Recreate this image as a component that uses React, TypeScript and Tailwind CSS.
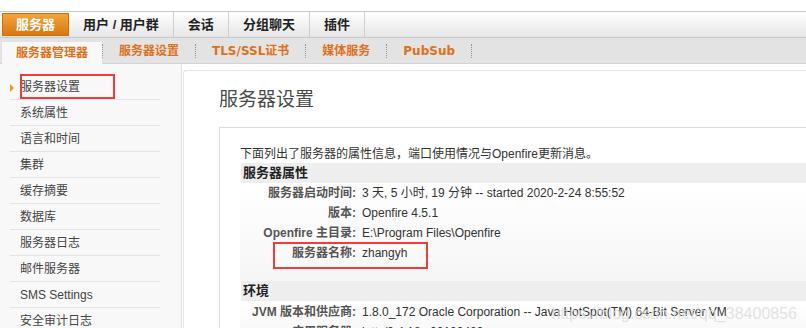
import type { ReactNode } from "react";

const FONT = { fontFamily: '"Liberation Sans", "Noto Sans CJK SC", sans-serif' };
const SUB_FONT = { fontFamily: '"DejaVu Sans", "Noto Sans CJK SC", sans-serif' };

const TABS = ["服务器", "用户 / 用户群", "会话", "分组聊天", "插件"];
const SUBTABS = ["服务器管理器", "服务器设置", "TLS/SSL证书", "媒体服务", "PubSub"];
const NAV = [
  "服务器设置",
  "系统属性",
  "语言和时间",
  "集群",
  "缓存摘要",
  "数据库",
  "服务器日志",
  "邮件服务器",
  "SMS Settings",
  "安全审计日志",
];

function Row({ label, children, boxed }: { label: string; children: ReactNode; boxed?: boolean }) {
  return (
    <div className="flex h-5 items-center text-[12px]">
      <div className={`flex h-full items-center ${boxed ? "relative" : ""}`}>
        <div className="w-[116px] text-right font-bold text-[#555]">{label}:</div>
        <div className="whitespace-nowrap pl-[6px] text-[#333]">{children}</div>
        {boxed && (
          <div className="absolute left-[33px] top-[-1px] h-[27px] w-[155px] border-2 border-[#f23b3b]" />
        )}
      </div>
    </div>
  );
}

export default function App() {
  return (
    <div className="relative h-[328px] w-[806px] overflow-hidden bg-white" style={FONT}>
      {/* top tabs */}
      <div className="mt-[11px] flex h-[27px] border-y border-[#c8c8c8] bg-gradient-to-b from-white to-[#e6e6e6] pl-[2px]">
        {TABS.map((t, i) => (
          <div
            key={t}
            className={
              i === 0
                ? "my-[1px] flex items-center border border-[#c9700c] bg-gradient-to-b from-[#f3a43a] to-[#d9780a] px-[13px] text-[13px] font-bold text-white"
                : "flex items-center border-r border-[#cfcfcf] px-[14px] text-[13px] font-bold text-[#222]"
            }
          >
            {t}
          </div>
        ))}
      </div>

      {/* sub tabs */}
      <div className="flex h-[26px] items-end border-b border-[#d4d4d4] bg-[#e3e3e3] pl-[2px]" style={SUB_FONT}>
        {SUBTABS.map((t, i) => (
          <div key={t} className="flex h-full items-center">
            <div
              className={
                i === 0
                  ? "mt-[4px] flex h-[22px] items-center bg-[#f8f8f8] px-[14px] text-[12px] font-bold text-[#e07018]"
                  : "flex h-full items-center px-[16px] text-[12px] font-bold text-[#e07018]"
              }
            >
              {t}
            </div>
            <div className="h-[14px] border-l border-dotted border-[#7d98ae]" />
          </div>
        ))}
      </div>

      {/* body */}
      <div className="flex h-full">
        <div className="w-[182px] shrink-0 border-r border-[#e2e2e2] bg-[#f8f8f8] pt-[10px]">
          {NAV.map((n, i) => (
            <div
              key={n}
              className="relative ml-[10px] flex h-[26px] w-[150px] items-center border-b border-[#e4e4e4] pl-[10px] text-[12px] text-[#444]"
            >
              {i === 0 && (
                <>
                  <span className="absolute left-0 top-[10px] h-0 w-0 border-y-[4px] border-l-[4px] border-y-transparent border-l-[#e8a010]" />
                  <span className="absolute left-[10px] top-0 h-[25px] w-[95px] border-2 border-[#f23b3b]" />
                </>
              )}
              {n}
            </div>
          ))}
        </div>

        <div className="flex-1 bg-white pl-[1px] pt-[6px]">
          <div className="h-full rounded-tl-[3px] border-l border-t border-[#e4e4e4] pl-[35px] pt-[14px]">
            <h1 className="text-[19px] leading-[30px] text-[#4a4a4a]">服务器设置</h1>
            <div className="mt-[12px] h-full border-l border-t border-[#dcdcdc] pl-[20px] pt-[18px]">
              <p className="text-[12px] leading-[16px] text-[#333]">
                下面列出了服务器的属性信息，端口使用情况与Openfire更新消息。
              </p>
              <div className="ml-[1px] mt-[1px] flex h-[20px] items-center bg-[#eeeeee] pl-[2px] text-[13px] font-bold text-[#222]">
                服务器属性
              </div>
              <div className="h-[98px] bg-gradient-to-b from-white to-[#f6f6f6]">
                <Row label="服务器启动时间">3 天, 5 小时, 19 分钟 -- started 2020-2-24 8:55:52</Row>
                <Row label="版本">Openfire 4.5.1</Row>
                <Row label="Openfire 主目录">E:\Program Files\Openfire</Row>
                <Row label="服务器名称" boxed>
                  zhangyh
                </Row>
              </div>
              <div className="ml-[1px] flex h-[20px] items-center bg-[#eeeeee] pl-[2px] text-[13px] font-bold text-[#222]">
                环境
              </div>
              <div className="bg-gradient-to-b from-white to-[#f6f6f6] pt-[1px]">
                <Row label="JVM 版本和供应商">
                  1.8.0_172 Oracle Corporation -- Java HotSpot(TM) 64-Bit Server VM
                </Row>
                <Row label="应用服务器">jetty/9.4.18.v20190429</Row>
              </div>
            </div>
          </div>
        </div>
      </div>

      {/* watermark */}
      <div className="pointer-events-none absolute right-[9px] top-[302px] whitespace-nowrap text-[16px] text-[#dcdcdc] opacity-80">
        https://blog.csdn.net/qq_38400856
      </div>
    </div>
  );
}
